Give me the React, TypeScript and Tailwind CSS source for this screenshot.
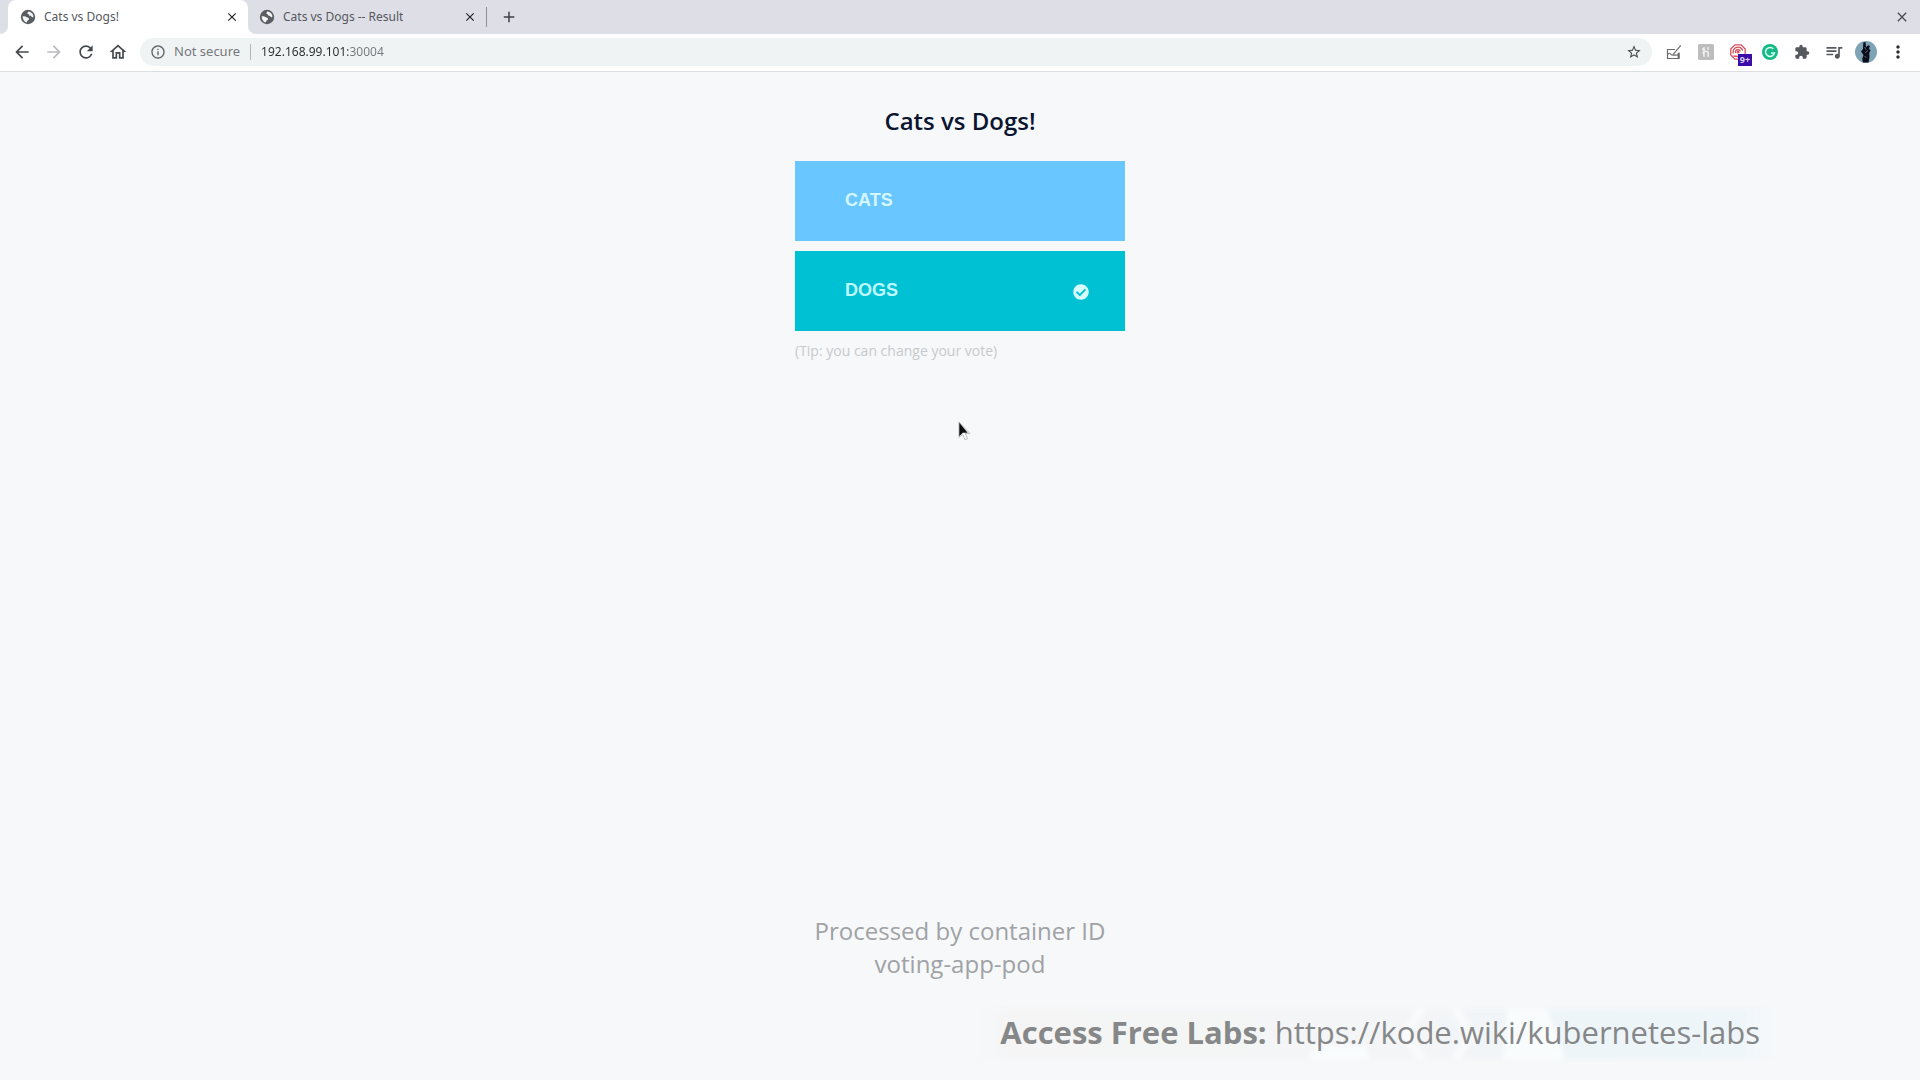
import React from "react";
import {
  MdArrowBack,
  MdArrowForward,
  MdClose,
  MdAdd,
  MdExtension,
  MdInfoOutline,
  MdMoreVert,
  MdOutlineHome,
  MdQueueMusic,
  MdRefresh,
  MdStarBorder,
} from "react-icons/md";
import { FaCheckCircle } from "react-icons/fa";

function Globe() {
  return (
    <svg viewBox="0 0 16 16" className="size-4 shrink-0" aria-hidden="true">
      <circle cx="8" cy="8" r="7.2" fill="#5a5d61" />
      <path
        d="M2.6 7.6c1.6-.5 3-.2 4.1.6.9.7 2.2.4 2.4 1.5.1.9-.9 1.3-1.5 1.7-.5.5-.4 1.4-1 2.1-2.300-.6-4-2.900-4-5.900z"
        fill="#f4f5f6"
      />
      <path
        d="M8.300 2.400c1.700.1 3.300 1 4.200 2.400.7 1 .9 2 .9 3.200-.9.500-1.500.1-2-.5-.5-.7-1.400-.500-2-.9-.7-.5-.4-1.200-1.100-1.500-.7-.3-1-.8-.8-1.400.1-.5.500-.700.800-1.300z"
        fill="#f4f5f6"
      />
    </svg>
  );
}

function Tab({ title, active }: { title: string; active?: boolean }) {
  return (
    <div
      className={
        active
          ? "relative flex h-full w-60 items-center rounded-t-lg bg-white pr-2 pl-3"
          : "flex h-full w-[238px] items-center pr-2 pl-[11px]"
      }
    >
      {active && (
        <>
          <span className="absolute bottom-0 -left-2 size-2 bg-white before:block before:size-2 before:rounded-br-lg before:bg-[#dedee7]" />
          <span className="absolute -right-2 bottom-0 size-2 bg-white before:block before:size-2 before:rounded-bl-lg before:bg-[#dedee7]" />
        </>
      )}
      <button role="tab" aria-selected={!!active} className="flex min-w-0 flex-1 items-center gap-2">
        <Globe />
        <span className="truncate text-xs text-[#55585c]">{title}</span>
      </button>
      <button aria-label={`Close ${title}`} className="flex size-4 items-center justify-center text-[#202124]">
        <MdClose className="size-3.5" />
      </button>
    </div>
  );
}

function ToolButton({ label, children }: { label: string; children: React.ReactNode }) {
  return (
    <button aria-label={label} className="flex size-8 shrink-0 items-center justify-center text-[#55585c]">
      {children}
    </button>
  );
}

function Toolbar() {
  return (
    <div className="flex h-[38px] items-center border-b border-[#dcdee1] bg-white px-1.5 pb-px">
      <ToolButton label="Back">
        <MdArrowBack className="size-5 text-[#45484c]" />
      </ToolButton>
      <ToolButton label="Forward">
        <MdArrowForward className="size-5 text-[#b9bbbe]" />
      </ToolButton>
      <ToolButton label="Reload">
        <MdRefresh className="size-5 text-[#45484c]" />
      </ToolButton>
      <ToolButton label="Home">
        <MdOutlineHome className="size-5 text-[#45484c]" />
      </ToolButton>
      <div className="mx-1.5 flex h-7 min-w-0 flex-1 items-center rounded-full bg-[#f0f3f4] px-2.5">
        <MdInfoOutline className="size-4 shrink-0 text-[#5f6368]" />
        <label htmlFor="address" className="ml-2 shrink-0 text-[13px] text-[#75787c]">
          Not secure
        </label>
        <span className="mr-2.5 ml-2.5 h-4 w-px shrink-0 bg-[#b4b7ba]" />
        <input
          id="address"
          defaultValue="192.168.99.101:30004"
          className="min-w-0 flex-1 bg-[linear-gradient(90deg,#2b2d30_87px,#75787c_87px)] bg-clip-text text-xs text-transparent outline-none"
        />
        <button aria-label="Bookmark this page" className="-mr-0.5 flex size-5 items-center justify-center">
          <MdStarBorder className="size-4 text-[#45484c]" />
        </button>
      </div>
      <ToolButton label="Sketch pad">
        <svg viewBox="0 0 16 16" className="size-4" fill="none" stroke="#6b6b6b" aria-hidden="true">
          <path d="M9 5.500H1.500v9h11.500v-6" strokeWidth="1.200" />
          <path d="M14.800 1.300 8.500 8.800l-1.500 1.700M1.500 11c1.500-2.500 2.800-2 3.500-.5s3 .5 8 .5" strokeWidth="1.200" />
          <path d="M12.500 9v5.500" strokeWidth="1.800" />
        </svg>
      </ToolButton>
      <ToolButton label="Coupons">
        <svg viewBox="0 0 16 16" className="size-4" aria-hidden="true">
          <rect width="16" height="16" rx="1.500" fill="#bdbdbd" />
          <path
            d="M6 3.200v9.600M6 8.200c1-1.200 3.600-1.500 4.200.2v4.400M4.300 4.500l1.700 2M10 3.300v2.500M4.500 9.500 6 8"
            fill="none"
            stroke="#efefef"
            strokeWidth="1.600"
          />
        </svg>
      </ToolButton>
      <ToolButton label="Tracker blocker, 9+ alerts">
        <span className="relative">
          <svg viewBox="0 0 16 16" className="size-4" fill="none" stroke="#d4505f" strokeWidth="1.300" aria-hidden="true">
            <path d="M5 .8h6L15.200 5v5.500L11 15.200H5L.8 11V5z" />
            <path d="M3.300 9.500a4.800 4.800 0 0 1 9.400-3M5.700 9a2.400 2.400 0 1 1 4.500-1.500M3.500 12 12 13" />
            <circle cx="8" cy="8" r=".8" />
          </svg>
          <span className="absolute top-2.5 left-2 flex h-3 w-3.5 items-center justify-center bg-[#3a0ca8] text-[9px] font-bold text-[#dcd0ff]">
            9+
          </span>
        </span>
      </ToolButton>
      <ToolButton label="Grammar checker">
        <svg viewBox="0 0 16 16" className="size-4" aria-hidden="true">
          <circle cx="8" cy="8" r="8" fill="#15b886" />
          <path d="M11.300 4.800A4.500 4.500 0 1 0 12.400 9H9" fill="none" stroke="#d9fff2" strokeWidth="1.500" />
        </svg>
      </ToolButton>
      <ToolButton label="Extensions">
        <MdExtension className="size-4" />
      </ToolButton>
      <ToolButton label="Media controls">
        <MdQueueMusic className="size-5" />
      </ToolButton>
      <ToolButton label="Profile">
        <svg viewBox="0 0 22 22" className="size-[22px]" aria-hidden="true">
          <circle cx="11" cy="11" r="11" fill="#7ea3b5" />
          <path
            d="M8.300 1.500 10.500 1l.5 5 2.300-1.700 1.700.7-1 2.500 1.500 2-1.300 2.500.3 4-1 5.500H7.800l-.5-4 1.200-3.500-2.500-3.500 2-2.500z"
            fill="#0c0d18"
          />
          <path d="m9.500 6 1.500 2.500M10 12l3-2.500M9.500 15l2 2" stroke="#6f7b9b" strokeWidth=".8" />
        </svg>
      </ToolButton>
      <ToolButton label="Menu">
        <MdMoreVert className="size-5 text-[#2b2d30]" />
      </ToolButton>
    </div>
  );
}

function VoteButton({ label, className, chosen }: { label: string; className: string; chosen?: boolean }) {
  return (
    <button
      type="submit"
      name="vote"
      aria-pressed={!!chosen}
      className={`flex h-20 w-full items-center justify-between pr-9 pb-0.5 pl-[50px] font-['Liberation_Sans',Arial,sans-serif] text-lg font-bold ${className}`}
    >
      {label}
      {chosen && <FaCheckCircle className="mt-1 size-4 text-[#d6fcff]" />}
    </button>
  );
}

export default function App() {
  return (
    <div className="relative flex min-h-screen flex-col overflow-hidden bg-[#f6f8fa] font-['Open_Sans',sans-serif]">
      <header className="font-['Noto_Sans',sans-serif]">
        <div className="flex h-[34px] items-center bg-[#dedee7] pr-2.5 pl-2">
          <div role="tablist" className="flex h-full">
            <Tab title="Cats vs Dogs!" active />
            <Tab title="Cats vs Dogs -- Result" />
          </div>
          <span className="h-5 w-px bg-[#8f9197]" />
          <button aria-label="New tab" className="ml-3 flex size-5 items-center justify-center text-[#3c4043]">
            <MdAdd className="size-[18px]" />
          </button>
          <button aria-label="Close window" className="ml-auto flex size-4 items-center justify-center text-[#4b4d52]">
            <MdClose className="size-4" />
          </button>
        </div>
        <Toolbar />
      </header>

      <main className="flex flex-1 flex-col items-center pt-8 pb-[100px]">
        <h1 className="text-2xl leading-[34px] font-semibold text-[#0b1530]">Cats vs Dogs!</h1>
        <form className="mt-[23px] flex w-[330px] flex-col gap-2.5" onSubmit={(e) => e.preventDefault()}>
          <VoteButton label="CATS" className="bg-[#6ac6ff] text-[#d4f6ff]" />
          <VoteButton label="DOGS" className="bg-[#00c0d3] text-[#bdfaff]" chosen />
          <p className="text-sm text-[#c8cacc]">(Tip: you can change your vote)</p>
        </form>
        <p className="mt-auto text-center text-2xl leading-[33px] text-[#a0a2a5]">
          Processed by container ID
          <br />
          voting-app-pod
        </p>
      </main>

      <svg viewBox="0 0 14 20" className="absolute top-[421px] left-[958px] h-5 w-3.5" aria-hidden="true">
        <path d="M1 1v15.500l3.600-3.300L7 18.800l2.600-1.200-2.400-5H12z" fill="#fff" stroke="#b8bbc0" />
        <path d="M1.300 1.800v13.400l3.500-3.500h4.900z" fill="#0d0d0f" />
      </svg>

      <aside className="absolute right-[142px] bottom-5 isolate flex h-[52px] items-center pr-[18px] pb-1 pl-6 text-[31px] text-[#858788]">
        <svg viewBox="0 0 800 52" preserveAspectRatio="none" className="absolute inset-0 -z-10 size-full blur-[2px]" aria-hidden="true">
          <defs>
            <linearGradient id="banner">
              <stop offset="0" stopColor="#f5f5f5" stopOpacity="0" />
              <stop offset=".04" stopColor="#f5f5f5" />
              <stop offset=".45" stopColor="#f4f5f6" />
              <stop offset=".65" stopColor="#f2f5f8" />
              <stop offset=".75" stopColor="#edf5f9" />
              <stop offset=".96" stopColor="#eff6f9" />
              <stop offset="1" stopColor="#f4f8fa" stopOpacity="0" />
            </linearGradient>
          </defs>
          <rect y="1" width="800" height="50" fill="url(#banner)" />
          <path d="M338 38h52l2 13h-60zM530 1h40l18 50h-62z" fill="#f9fcfd" />
          <path d="M445 1 428 26l17 25M478 1l17 25-17 25" fill="none" stroke="#f8fafb" strokeWidth="9" />
        </svg>
        <p className="whitespace-nowrap">
          <strong className="font-bold">Access Free Labs:</strong>{" "}
          <a href="https://kode.wiki/kubernetes-labs">https://kode.wiki/kubernetes-labs</a>
        </p>
      </aside>
    </div>
  );
}
